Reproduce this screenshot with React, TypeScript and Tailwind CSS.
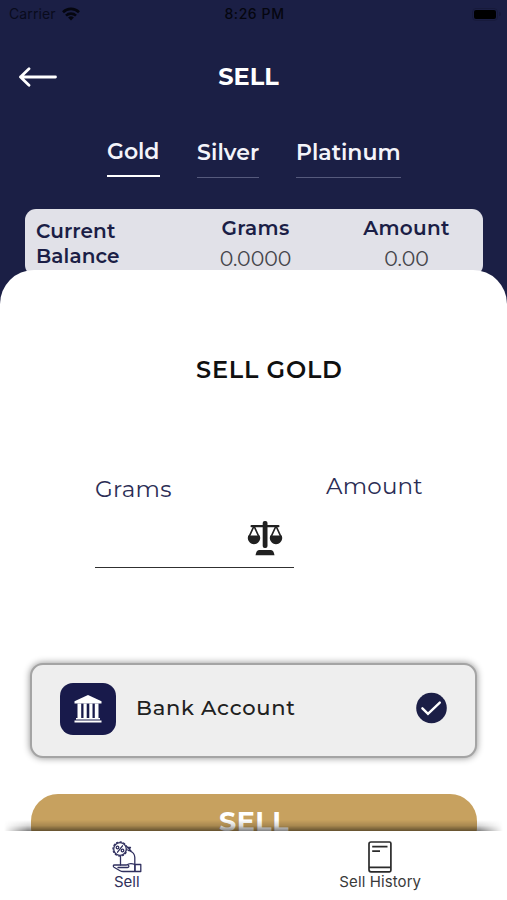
import type { ReactNode } from "react";

const tabs = [
  { label: "Gold", active: true, className: "w-[53px] tracking-[-0.1px]" },
  { label: "Silver", active: false, className: "w-[62px] tracking-[0.1px]" },
  { label: "Platinum", active: false, className: "w-[105px]" },
];

function StatusBar() {
  return (
    <div className="flex h-7 items-center justify-between pl-[9px] pr-[6px] font-['Inter',sans-serif] text-sm text-[#05060f]">
      <div className="flex w-[120px] items-center gap-[6px]">
        <span className="tracking-[0.1px] text-[#090b1c]">Carrier</span>
        <svg width="18" height="14" viewBox="0 0 18 14" fill="none" stroke="currentColor" strokeWidth="2.6">
          <path d="M1 5.2a11.4 11.4 0 0 1 16 0" />
          <path d="M4 8.6a7.2 7.2 0 0 1 10 0" />
          <path d="M9 13.6 6.1 10.6a4.2 4.2 0 0 1 5.8 0Z" fill="currentColor" stroke="none" />
        </svg>
      </div>
      <span className="pr-px font-medium tracking-[0.6px]">8:26 PM</span>
      <div className="flex w-[120px] items-center justify-end gap-px">
        <div className="rounded-[4px] border border-[#171a3b] p-px">
          <div className="h-[9px] w-[22px] rounded-[2px] bg-black" />
        </div>
        <div className="h-1 w-[1.5px] rounded-r bg-[#171a3b]" />
      </div>
    </div>
  );
}

function Header() {
  return (
    <div className="flex h-[98px] items-center pl-[18px] pr-5">
      <svg width="39" height="20" viewBox="0 0 39 20" fill="none" stroke="#fff" strokeWidth="2.8" strokeLinecap="round" strokeLinejoin="round">
        <path d="M37.500 10H2.500M11 1.800 2.500 10l8.500 8.200" />
      </svg>
      <h1 className="flex-1 pr-[47px] text-center text-[24px] leading-[30px] font-bold text-white">SELL</h1>
    </div>
  );
}

function Tabs() {
  return (
    <div className="flex items-start gap-[37px] pl-[107px] pt-[11px]">
      {tabs.map((tab) => (
        <div
          key={tab.label}
          className={`${tab.className} ${tab.active ? "h-10 border-b-2 border-white" : "h-[41px] border-b border-[#565a7c] pt-px"} whitespace-nowrap text-[22px] leading-[30px] font-semibold text-[#f4f4fa]`}
        >
          {tab.label}
        </div>
      ))}
    </div>
  );
}

function Balance({ label, value, className }: { label: string; value: string; className: string }) {
  return (
    <div className={`${className} text-center whitespace-nowrap`}>
      <p className="text-[20px] leading-[28px] font-semibold tracking-[0.3px] text-[#1b1e46]">{label}</p>
      <p className="text-[20.5px] leading-[33px] text-[#46464c]">{value}</p>
    </div>
  );
}

function BalanceCard() {
  return (
    <div className="mx-[25px] mt-[31px] flex h-[67px] w-[458px] rounded-[11px] bg-[#e1e1e8] pt-[5px]">
      <p className="w-[170px] pl-[11px] pt-[5px] text-[20px] leading-[24.5px] font-semibold tracking-[0.1px] text-[#1b1e46]">
        Current
        <br />
        Balance
      </p>
      <Balance label="Grams" value="0.0000" className="w-[121px]" />
      <Balance label="Amount" value="0.00" className="ml-[30px] w-[121px]" />
    </div>
  );
}

function ScaleIcon() {
  return (
    <svg width="36" height="36" viewBox="0 0 36 36" fill="#202020">
      <rect x="15.700" y="1" width="4.800" height="27" rx="2" />
      <rect x="3.500" y="5" width="29" height="2.200" rx="1" />
      <path d="M12 30h12c2 0 3 2.300 3.500 5.200h-19c.5-2.900 1.500-5.200 3.500-5.200Z" />
      <path d="M7 6 2.200 16.500M7 6l4.800 10.500M29 6l-4.800 10.500M29 6l4.800 10.500" stroke="#202020" strokeWidth="1.700" fill="none" />
      <path d="M1.300 15.500h11.400a6.200 6.200 0 1 1-11.400 0ZM23.300 15.500h11.400a6.200 6.200 0 1 1-11.400 0Z" />
    </svg>
  );
}

function BankIcon() {
  return (
    <svg className="mt-px" width="28" height="28" viewBox="0 0 28 28" fill="#fff">
      <path d="M14 0 27.500 6.300V8.500H.5V6.300Z" />
      <path d="M3.500 8.500h3.700V23H3.500ZM9.500 8.500h3.200V23H9.500ZM15.300 8.500h3.200V23h-3.200ZM20.800 8.500h3.700V23h-3.700Z" />
      <path d="M2 23h24v1.500H2ZM.5 25.400h27V27.500H.5Z" />
    </svg>
  );
}

function BankAccount() {
  return (
    <div className="mx-[30px] mt-[95px] flex h-[95px] w-[447px] items-center rounded-[13px] border-2 border-[#a4a4a4] bg-[#eeeeee] px-[28px] shadow-[0_0_7px_rgba(0,0,0,0.45)]">
      <div className="mb-[4px] flex h-[52px] w-[56px] items-center justify-center rounded-[13px] bg-[#181a4b]">
        <BankIcon />
      </div>
      <span className="ml-5 mb-[6px] text-[21px] leading-[30px] font-medium tracking-[0.75px] whitespace-nowrap text-[#202020]">Bank Account</span>
      <svg className="ml-auto mb-[5px]" width="32" height="32" viewBox="0 0 32 32" fill="none">
        <circle cx="16.500" cy="16" r="15.300" fill="#1b1e46" />
        <path d="m7.400 16.300 5.600 5.600L24.800 10.600" stroke="#fff" strokeWidth="2.400" strokeLinecap="round" />
      </svg>
    </div>
  );
}

function SellForm() {
  return (
    <div className="relative -mt-[6px] flex-1 overflow-hidden rounded-t-[34px] bg-white">
      <h2 className="pl-[196px] pt-[85px] text-[24px] leading-[30px] font-semibold tracking-[0.8px] whitespace-nowrap text-[#101010]">SELL GOLD</h2>
      <div className="mt-[86px] flex pl-[95px] text-[23px] leading-[30px] text-[#2b2d55]">
        <label className="mt-[3px] block h-[94px] w-[199px] border-b border-[#303030]">
          <span className="tracking-[0.3px]">Grams</span>
          <span className="mt-[16px] flex justify-end pr-[11px]">
            <ScaleIcon />
          </span>
        </label>
        <span className="ml-8 tracking-[0.2px]">Amount</span>
      </div>
      <BankAccount />
      <button className="mx-[31px] mt-[36px] block h-[60px] w-[446px] rounded-[27px] bg-[#c7a15f] pb-[5px] text-center text-[27px] leading-[30px] font-bold tracking-[0.5px] text-white">
        SELL
      </button>
      <div className="absolute inset-x-1 bottom-0 h-[11px] bg-linear-to-t from-black/50 via-black/15 to-transparent mask-[linear-gradient(to_right,transparent,black_24px,black_calc(100%-24px),transparent)]" />
    </div>
  );
}

function SellIcon() {
  return (
    <svg width="30" height="32" viewBox="0 0 30 32" fill="none" stroke="#30305f" strokeWidth="1.300" strokeLinecap="round" strokeLinejoin="round">
      <circle cx="8" cy="8" r="6.300" />
      <circle cx="8" cy="8" r="7.100" strokeDasharray="1.500 2.200" strokeWidth="1.100" />
      <path d="M10.500 4.800 5.500 11.200" />
      <circle cx="5.500" cy="6.500" r="1.300" />
      <circle cx="10.500" cy="9.500" r="1.300" />
      <path d="M15.500 6.500h3l-2 3M15.500 6l3.500 4M17 9.500c4 1.500 5.800 3.500 5.800 7V30M8.500 15.500V24" />
      <path d="M23 23.500h5.800V30.500H23ZM23 23.500c-3-1.300-6-1.300-8.500.5H2.500c-1.500 0-1.500 1.500-.5 2.200l6 3.500c1 .6 2 .8 3.200.8H23M6 26.500h9.500c1.500 0 2-1.700.5-2.500" />
    </svg>
  );
}

function HistoryIcon() {
  return (
    <svg width="24" height="32" viewBox="0 0 24 32" fill="none" stroke="#2b2b2b" strokeWidth="1.700" strokeLinejoin="round">
      <path d="M3 1H21.500Q22.900 1 22.900 2.500V29.300Q22.900 30.800 21.500 30.800H3C1.800 30.800 1 30 1 28.800V3C1 1.800 1.800 1 3 1Z" />
      <path d="M1 26.300H22.900M4.200 5.600H19.500M4.200 10.200H12" />
    </svg>
  );
}

function NavItem({ icon, label, className }: { icon: ReactNode; label: string; className: string }) {
  return (
    <div className={`${className} flex flex-1 flex-col items-center pt-[10px] font-['Inter',sans-serif] text-[15px] leading-[18px]`}>
      {icon}
      <span>{label}</span>
    </div>
  );
}

export default function App() {
  return (
    <div className="flex h-[900px] w-[507px] flex-col overflow-hidden bg-[#1b1f45] font-['Montserrat','Inter',sans-serif]">
      <StatusBar />
      <Header />
      <Tabs />
      <BalanceCard />
      <SellForm />
      <nav className="flex h-[69px] shrink-0 bg-white">
        <NavItem icon={<SellIcon />} label="Sell" className="text-[#30305a]" />
        <NavItem icon={<HistoryIcon />} label="Sell History" className="text-[#3a3a3a] tracking-[0.1px]" />
      </nav>
    </div>
  );
}
